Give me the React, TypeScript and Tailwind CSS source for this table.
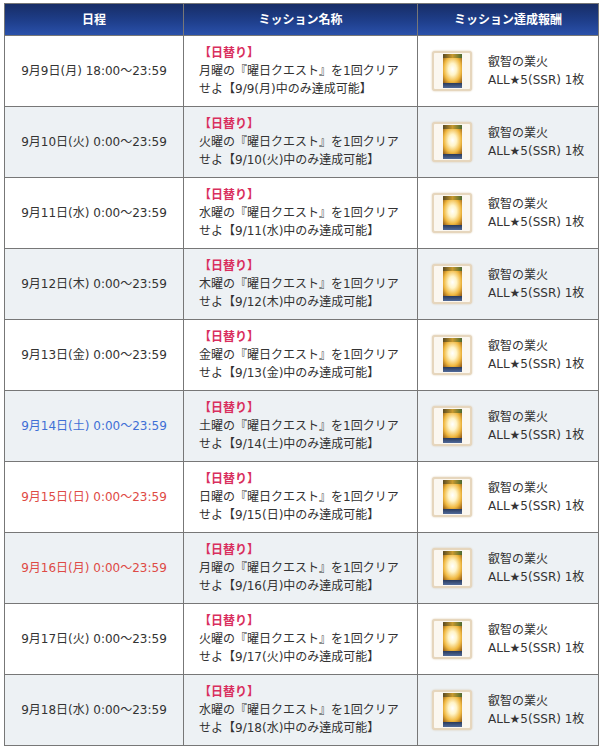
const rows = [
  { date: "9月9日(月) 18:00～23:59", day: "月", md: "9/9(月)", tone: "" },
  { date: "9月10日(火) 0:00～23:59", day: "火", md: "9/10(火)", tone: "" },
  { date: "9月11日(水) 0:00～23:59", day: "水", md: "9/11(水)", tone: "" },
  { date: "9月12日(木) 0:00～23:59", day: "木", md: "9/12(木)", tone: "" },
  { date: "9月13日(金) 0:00～23:59", day: "金", md: "9/13(金)", tone: "" },
  { date: "9月14日(土) 0:00～23:59", day: "土", md: "9/14(土)", tone: "blue" },
  { date: "9月15日(日) 0:00～23:59", day: "日", md: "9/15(日)", tone: "red" },
  { date: "9月16日(月) 0:00～23:59", day: "月", md: "9/16(月)", tone: "red" },
  { date: "9月17日(火) 0:00～23:59", day: "火", md: "9/17(火)", tone: "" },
  { date: "9月18日(水) 0:00～23:59", day: "水", md: "9/18(水)", tone: "" },
];

function CardIcon() {
  return (
    <div className="flex h-[40px] w-[40px] shrink-0 items-center justify-center rounded-[3px] border-2 border-[#e6d6bd] bg-[#fbf7f0] shadow-[0_0_2px_#d8c4a4]">
      <div className="flex h-[34px] w-[19px] flex-col overflow-hidden rounded-[1px] bg-[#3a2a14]">
        <div className="h-[4px] bg-[linear-gradient(90deg,#5a4a20,#c89a30,#4a6a30)]" />
        <div className="flex-1 bg-[radial-gradient(ellipse_at_50%_45%,#ffffff_0%,#fff4c8_30%,#f0b840_65%,#8a5210_100%)]" />
        <div className="h-[5px] bg-[linear-gradient(180deg,#2a3a5a,#506a9a)]" />
      </div>
    </div>
  );
}

export default function App() {
  return (
    <div className="min-h-[748px] bg-white pl-[4px] pt-[3px] font-['DejaVu_Sans','Noto_Sans_CJK_JP',sans-serif] text-[12px] leading-[18px] text-[#333]">
      <table className="w-[594px] table-fixed border-collapse border border-[#777]">
        <colgroup>
          <col className="w-[179px]" />
          <col className="w-[234px]" />
          <col className="w-[181px]" />
        </colgroup>
        <thead>
          <tr className="h-[32px] bg-[linear-gradient(180deg,#172d66_0%,#1f3f8c_55%,#2b52ad_100%)] text-white">
            <th className="border border-[#777] font-bold">日程</th>
            <th className="border border-[#777] font-bold">ミッション名称</th>
            <th className="border border-[#777] font-bold">ミッション達成報酬</th>
          </tr>
        </thead>
        <tbody>
          {rows.map((r, i) => (
            <tr key={r.md} className={`h-[71px] ${i % 2 === 1 ? "bg-[#edf1f4]" : "bg-white"}`}>
              <td
                className={`border border-[#777] text-center ${
                  r.tone === "blue" ? "text-[#3f6fd6]" : r.tone === "red" ? "text-[#de4a45]" : ""
                }`}
              >
                {r.date}
              </td>
              <td className="border border-[#777] pl-[15px] pr-[2px]">
                <div className="font-bold text-[#d92f5e]">【日替り】</div>
                <div className="whitespace-nowrap">{r.day}曜の『曜日クエスト』を1回クリア</div>
                <div className="whitespace-nowrap">せよ【{r.md}中のみ達成可能】</div>
              </td>
              <td className="border border-[#777] pl-[14px]">
                <div className="flex items-center gap-[16px]">
                  <CardIcon />
                  <div className="whitespace-nowrap">
                    <div>叡智の業火</div>
                    <div>ALL★5(SSR) 1枚</div>
                  </div>
                </div>
              </td>
            </tr>
          ))}
        </tbody>
      </table>
    </div>
  );
}
